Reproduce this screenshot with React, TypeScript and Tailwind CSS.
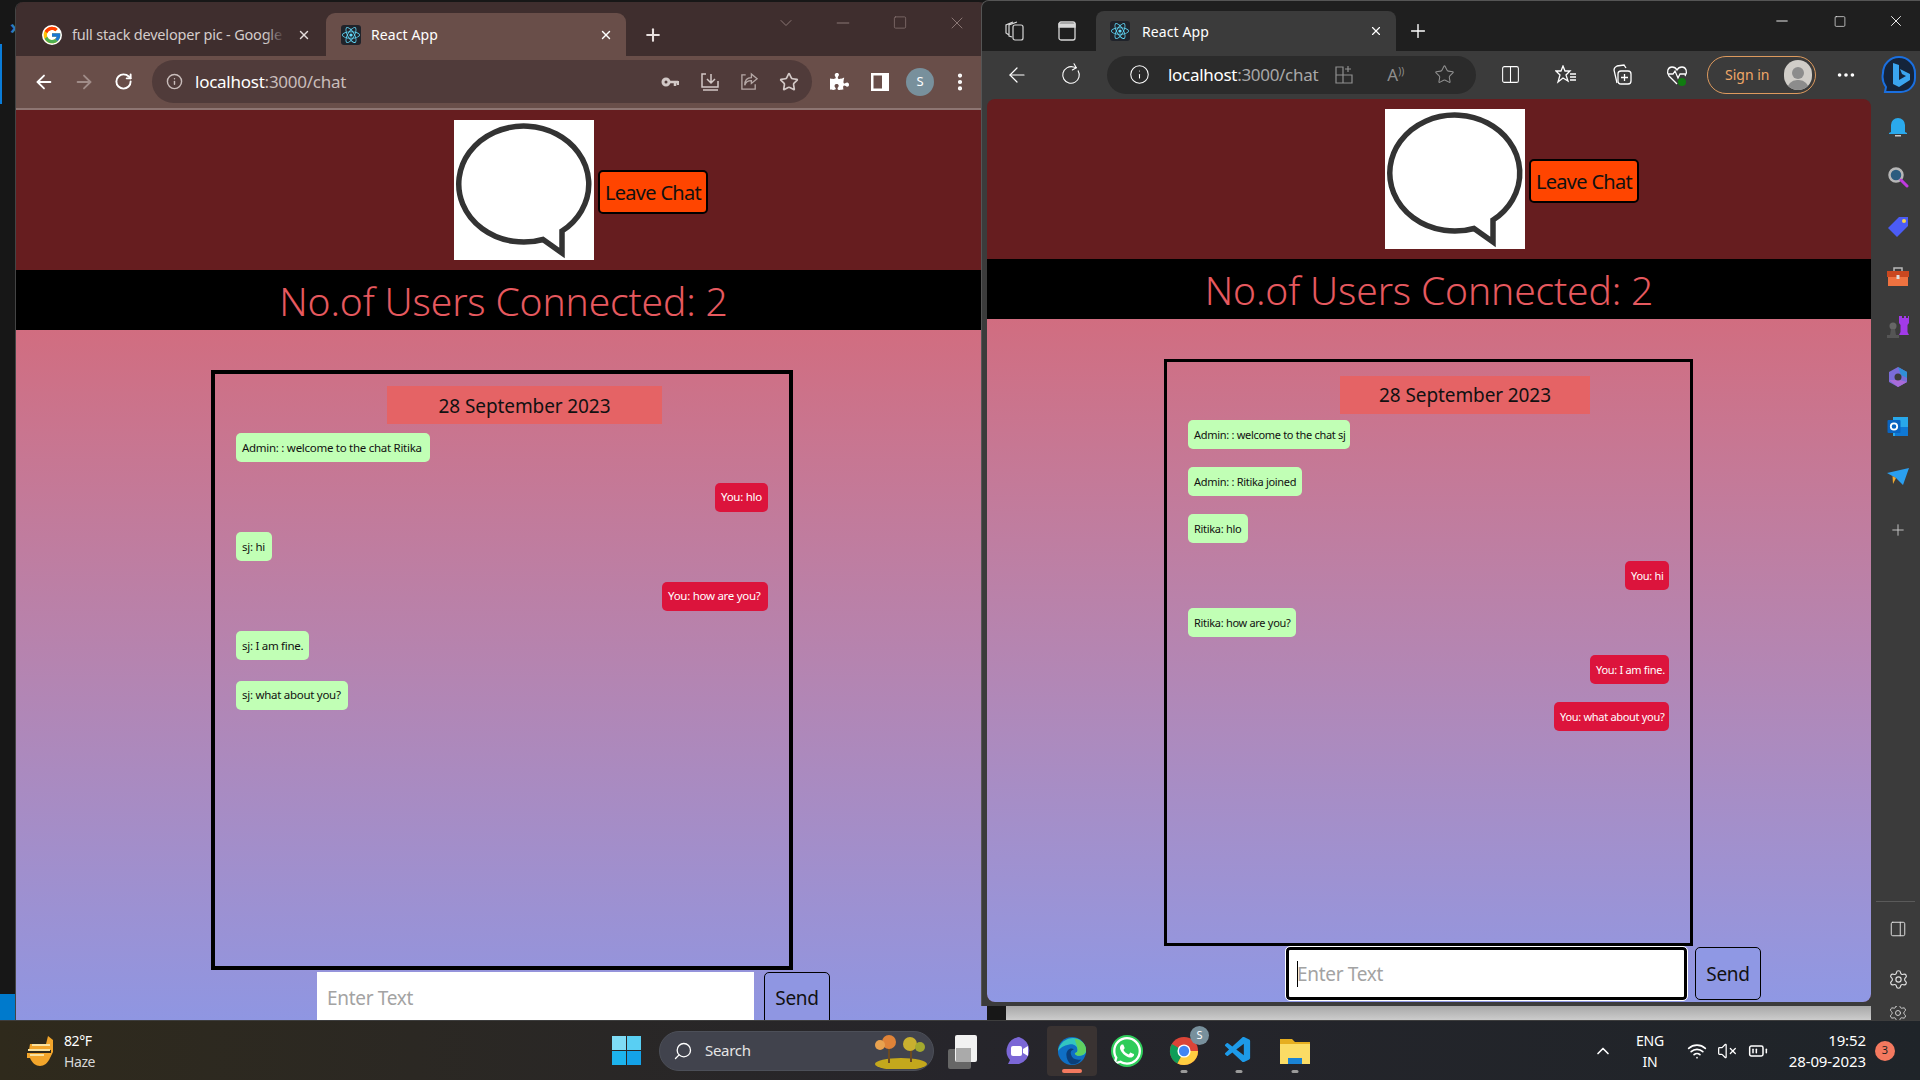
import React from "react";
import { ArrowLeft, ArrowRight, RotateCw, Info, Star, Plus, X, Minus, Square, ChevronDown, ChevronUp, MoreVertical, MoreHorizontal, Search, Settings, Wifi, VolumeX, BatteryMedium, Columns2, PanelRight } from "lucide-react";
import { FaReact, FaWhatsapp, FaPuzzlePiece } from "react-icons/fa";
import { FcGoogle } from "react-icons/fc";
import { VscVscode } from "react-icons/vsc";

const font = { fontFamily: '"Noto Sans", sans-serif' };

function ReactFav() {
  return <span className="flex h-[20px] w-[20px] items-center justify-center rounded-[3px] bg-[#20232a]"><FaReact className="h-[18px] w-[18px] text-[#61dafb]" /></span>;
}

function BubbleImage() {
  return (
    <div className="h-[140px] w-[140px] shrink-0 bg-white">
      <svg viewBox="0 0 140 140" className="h-full w-full">
        <path d="M108 111V133L89 119.500A65 58 0 1 1 108 111Z" fill="#fff" stroke="#333" strokeWidth="5.500" />
      </svg>
    </div>
  );
}

function Msg({ text, me, w, small }: { text: string; me?: boolean; w: string; small?: boolean }) {
  return (
    <div className={`flex h-[29px] items-center rounded-[5px] px-[6px] leading-none ${small ? "text-[11px] tracking-[-0.3px]" : "text-[11.5px] tracking-[-0.28px]"} ${w} ${me ? "self-end bg-[#dc143c] text-white" : "self-start bg-[#c1ffb5] text-[#111]"}`}>
      <span className="whitespace-nowrap">{text}</span>
    </div>
  );
}

function Heading() {
  return <div className="flex h-[60px] shrink-0 items-center justify-center bg-black pt-[2px] text-[39px] font-light tracking-[-0.15px] text-[#e6595f]">No.of Users Connected: 2</div>;
}

function LeaveBtn({ cls }: { cls: string }) {
  return <button className={`flex h-[44px] items-center justify-center rounded-[5px] border-2 border-black bg-[#ff4500] pt-[1px] text-[20px] tracking-[-0.7px] text-[#111] ${cls}`}>Leave Chat</button>;
}

function ChromeWin() {
  return (
    <div className="absolute left-[15px] top-[2px] flex h-[1018px] w-[972px] flex-col overflow-hidden rounded-t-[8px] border-l border-[#444]" style={font}>
      <div className="flex h-[54px] shrink-0 items-end bg-[#3f2e2e] text-[14px]">
        <div className="flex h-[43px] w-[310px] items-center">
          <FcGoogle className="ml-[26px] h-[20px] w-[20px] rounded-full bg-white" />
          <span className="relative ml-[10px] w-[213px] overflow-hidden whitespace-nowrap text-[14.5px] tracking-[-0.2px] text-[#d4cccb]">
            full stack developer pic - Google
            <span className="absolute bottom-0 right-0 top-0 w-[20px] bg-gradient-to-r from-transparent to-[#3f2e2e]" />
          </span>
          <X className="ml-[12px] h-[14px] w-[14px] text-[#e4dcdb]" strokeWidth={2.5} />
        </div>
        <div className="flex h-[43px] w-[300px] items-center rounded-t-[9px] bg-[#694e49] text-white">
          <span className="ml-[15px]"><ReactFav /></span>
          <span className="ml-[10px] tracking-[0.1px]">React App</span>
          <X className="ml-auto mr-[13px] h-[14px] w-[14px]" strokeWidth={2.5} />
        </div>
        <div className="flex h-[43px] flex-1 items-center">
          <Plus className="ml-[17px] h-[20px] w-[20px] text-[#e8e0df]" strokeWidth={2.5} />
          <ChevronDown className="ml-[113px] mb-[24px] h-[20px] w-[20px] text-[#8a7674]" strokeWidth={1.2} />
          <Minus className="ml-[37px] mb-[24px] h-[20px] w-[20px] text-[#8a7674]" strokeWidth={1.2} />
          <Square className="ml-[37px] mb-[24px] h-[15px] w-[20px] text-[#8a7674]" strokeWidth={1.2} />
          <X className="ml-[37px] mb-[24px] h-[20px] w-[20px] text-[#8a7674]" strokeWidth={1.2} />
        </div>
      </div>
      <div className="flex h-[52px] shrink-0 items-center bg-[#694e49] pb-[1px]">
        <ArrowLeft className="ml-[17px] h-[22px] w-[22px] text-white" strokeWidth={2} />
        <ArrowRight className="ml-[18px] h-[22px] w-[22px] text-[#a08c88]" strokeWidth={2} />
        <RotateCw className="ml-[19px] h-[19px] w-[19px] text-white" strokeWidth={2.4} />
        <div className="ml-[19px] flex h-[43px] w-[660px] items-center rounded-full bg-[#503b3a]">
          <Info className="ml-[14px] h-[17px] w-[17px] text-[#c9bdbb]" strokeWidth={2} />
          <span className="ml-[12px] text-[17px] tracking-[-0.25px] text-white">localhost<span className="text-[#c9bdbb]">:3000/chat</span></span>
          <svg viewBox="0 0 18 12" className="ml-auto h-[12px] w-[18px] fill-none stroke-[#d2c8c6]"><circle cx="5" cy="6" r="3" strokeWidth="3" /><path d="M8 6h9M14 6v4M17 5v4" strokeWidth="2.500" /></svg>
          <svg viewBox="0 0 20 20" className="ml-[21px] h-[20px] w-[20px] fill-none stroke-[#d2c8c6] stroke-[1.5]"><path d="M6 2H2v13h16V9M3 18h15M11 2v9M7 7l4 4 4-4" /></svg>
          <svg viewBox="0 0 20 20" className="ml-[20px] h-[19px] w-[19px] fill-none stroke-[#b5a8a6] stroke-[1.4]"><path d="M6 3H2v15h14v-5M12 2l6 5-6 5V9c-4 0-6 1-7 5 0-6 3-8 7-8z" /></svg>
          <Star className="ml-[20px] mr-[13px] h-[20px] w-[20px] text-[#d2c8c6]" strokeWidth={2} />
        </div>
        <FaPuzzlePiece className="ml-[18px] h-[19px] w-[19px] text-white" />
        <svg viewBox="0 0 18 18" className="ml-[22px] h-[18px] w-[18px]"><path d="M0 0h18v18H0z" fill="#fff" /><path d="M2.500 2.500H11v13H2.500z" fill="#694e49" /></svg>
        <span className="ml-[17px] flex h-[28px] w-[28px] items-center justify-center rounded-full bg-[#78909c] text-[13px] text-white">S</span>
        <MoreVertical className="ml-[15px] h-[22px] w-[22px] text-white" strokeWidth={2.6} />
      </div>
      <div className="h-[2px] shrink-0 bg-[#8d7572]" />
      <div className="flex min-h-0 flex-1 flex-col bg-[#661d1f]">
        <div className="flex h-[160px] shrink-0 pl-[438px] pt-[10px]">
          <BubbleImage />
          <LeaveBtn cls="ml-[4px] mt-[50px] w-[110px]" />
        </div>
        <div className="w-[966px] bg-black pl-[9px]"><Heading /></div>
        <div className="flex min-h-0 flex-1 flex-col bg-gradient-to-b from-[#d16d80] to-[#8f96e2] pl-[195px] pt-[40px]">
          <div className="flex h-[600px] w-[582px] shrink-0 flex-col border-[4px] border-black px-[21px] pt-[12px]">
            <div className="ml-[151px] flex h-[38px] w-[275px] items-center justify-center bg-[#e56365] pt-[2px] text-[19px] tracking-[-0.1px] text-[#111]">28 September 2023</div>
            <div className="mt-[9px] flex flex-col gap-[20.5px]">
              <Msg text="Admin: : welcome to the chat Ritika" w="w-[194px]" />
              <Msg text="You: hlo" me w="w-[53px]" />
              <Msg text="sj: hi" w="w-[36px]" />
              <Msg text="You: how are you?" me w="w-[106px]" />
              <Msg text="sj: I am fine." w="w-[73px]" />
              <Msg text="sj: what about you?" w="w-[112px]" />
            </div>
          </div>
          <div className="ml-[106px] mt-[2px] flex h-[60px] items-start">
            <div className="flex h-[60px] w-[437px] items-center bg-white pb-[7px] pl-[10px] text-[19px] tracking-[-0.3px] text-[#a3a3a3]">Enter Text</div>
            <div className="ml-[10px] flex h-[60px] w-[66px] items-center justify-center rounded-[5px] border border-black bg-[#8f96e2] pb-[7px] text-[19px] tracking-[-0.3px] text-[#111]">Send</div>
          </div>
        </div>
      </div>
    </div>
  );
}

function SideIcon({ children, cls = "" }: { children: React.ReactNode; cls?: string }) {
  return <div className={`flex h-[50px] items-center justify-center ${cls}`}>{children}</div>;
}

function Sidebar() {
  return (
    <div className="flex w-[49px] shrink-0 flex-col items-center pl-[5px]">
      <div className="mt-[3px] w-full">
        <SideIcon><svg viewBox="0 0 20 22" className="h-[22px] w-[20px]"><path d="M3 16V9a7 7 0 0 1 14 0v7l2 1v1H1v-1z" fill="#2aa9ec" /><path d="M7 19h6v1.500H7z" fill="#c9c9c9" /></svg></SideIcon>
        <SideIcon><svg viewBox="0 0 22 22" className="h-[22px] w-[22px]"><circle cx="9" cy="9" r="6.500" fill="#2c5c7f" stroke="#b6b6b6" strokeWidth="2.500" /><path d="M14 14l6 6" stroke="#c03ae0" strokeWidth="3" strokeLinecap="round" /></svg></SideIcon>
        <SideIcon><svg viewBox="0 0 22 22" className="h-[22px] w-[22px]"><path d="M12 1h9v9L10 21 1 12z" fill="#4b5cf5" /><circle cx="17" cy="5" r="2" fill="#f6d24a" /></svg></SideIcon>
        <SideIcon><svg viewBox="0 0 24 20" className="h-[20px] w-[24px]"><path d="M8 4V1h8v3" fill="none" stroke="#b9b9b9" strokeWidth="1.500" /><path d="M1 4h22v6H1z" fill="#c9471f" /><path d="M2 10h20v9H2z" fill="#ee7240" /><path d="M10.500 8h3v4h-3z" fill="#ddd" /></svg></SideIcon>
        <SideIcon><svg viewBox="0 0 24 24" className="h-[24px] w-[24px]"><path d="M14 1h2v2h2V1h2v2h2V1h1v7l-1.500 2v7l1.500 3H13l1.500-3v-7L13 8V1z" fill="#a23ae8" /><circle cx="7" cy="11" r="3.500" fill="#666" /><path d="M5 14h4l1 6H4zM1 20h12v3H1z" fill="#555" /></svg></SideIcon>
        <SideIcon><svg viewBox="0 0 22 22" className="h-[22px] w-[22px]"><path d="M11 1 20 6v10l-9 5-9-5V6z" fill="#7a6cd8" /><path d="M11 1 20 6v6l-6-3z" fill="#2f8fd8" /><path d="M2 14l9 7 9-5-7-2z" fill="#a86bd8" /><circle cx="11" cy="11" r="3.500" fill="#3b3b3b" /></svg></SideIcon>
        <SideIcon><svg viewBox="0 0 22 22" className="h-[22px] w-[22px]"><path d="M6 1h15v19H6z" fill="#28a8ea" /><path d="M8 11h13v9H8z" fill="#0f78d4" /><rect x="0.500" y="4" width="13" height="13" rx="1" fill="#0a64c0" /><circle cx="7" cy="10.500" r="3.200" fill="none" stroke="#fff" strokeWidth="1.800" /></svg></SideIcon>
        <SideIcon><svg viewBox="0 0 22 18" className="h-[18px] w-[22px]"><path d="M0 5 22 0 16 17 9 10z" fill="#2a9ff0" /><path d="M0 5 9 10 6 16 5.500 8z" fill="#f0a830" /></svg></SideIcon>
        <SideIcon cls="pt-[6px]"><Plus className="h-[18px] w-[18px] text-[#cfcfcf]" strokeWidth={1.2} /></SideIcon>
      </div>
      <div className="mt-auto w-full">
        <div className="mb-[2px] mr-[5px] h-px bg-[#5a5a5a]" />
        <SideIcon><PanelRight className="h-[18px] w-[18px] text-[#e0e0e0]" strokeWidth={1.3} /></SideIcon>
        <SideIcon cls="mb-[2px]"><Settings className="h-[21px] w-[21px] text-[#e0e0e0]" strokeWidth={1.3} /></SideIcon>
      </div>
    </div>
  );
}

function BingLogo() {
  return (
    <svg viewBox="0 0 36 40" className="h-[40px] w-[36px]">
      <path d="M18 2a16 16 0 0 1 16 16v5a14 14 0 0 1-14 14H4l1-5a17 17 0 0 1-3-14A16 16 0 0 1 18 2z" fill="#15243a" stroke="#1a6fe0" strokeWidth="2" />
      <path d="M12 8l6 2v15l7-4-4-2-2-5 10 5v6l-11 7-6-3z" fill="#3aa5f0" />
    </svg>
  );
}

function EdgeWin() {
  return (
    <div className="absolute left-[981px] top-0 flex h-[1006px] w-[939px] flex-col overflow-hidden rounded-tl-[8px] border-l border-t border-[#555] bg-[#3b3b3b] text-white" style={font}>
      <div className="flex h-[50px] shrink-0 items-end bg-[#1f1f1f] text-[14px]">
        <svg viewBox="0 0 20 22" className="mb-[9px] ml-[23px] h-[22px] w-[20px] fill-none stroke-[#d8d8d8] stroke-[1.2]"><rect x="8" y="5" width="10" height="15" rx="2" /><path d="M7 17 4 16V5l8-3M4 15 1 13V5l7-3" /></svg>
        <svg viewBox="0 0 18 20" className="mb-[10px] ml-[33px] h-[20px] w-[18px] fill-none stroke-[#d8d8d8] stroke-[1.3]"><rect x="1" y="1" width="16" height="18" rx="2" /><path d="M1 3h16v3H1z" fill="#d8d8d8" /></svg>
        <div className="ml-[20px] flex h-[40px] w-[300px] items-center rounded-t-[8px] bg-[#3b3b3b]">
          <span className="ml-[14px]"><ReactFav /></span>
          <span className="ml-[12px] tracking-[0.1px]">React App</span>
          <X className="ml-auto mr-[13px] h-[14px] w-[14px]" strokeWidth={2} />
        </div>
        <Plus className="mb-[9px] ml-[11px] h-[22px] w-[22px]" strokeWidth={1.5} />
        <Minus className="mb-[21px] ml-[344px] h-[18px] w-[18px]" strokeWidth={1.2} />
        <Square className="mb-[23px] ml-[40px] h-[13px] w-[18px]" strokeWidth={1.2} />
        <X className="mb-[21px] ml-[38px] h-[18px] w-[18px]" strokeWidth={1.2} />
      </div>
      <div className="flex h-[48px] shrink-0 items-center pb-[1px]">
        <ArrowLeft className="ml-[23px] h-[24px] w-[24px]" strokeWidth={1.2} />
        <RotateCw className="ml-[31px] h-[22px] w-[22px] -rotate-[30deg]" strokeWidth={1.2} />
        <div className="ml-[25px] flex h-[38px] w-[369px] items-center rounded-full bg-[#2b2b2b]">
          <Info className="ml-[22px] h-[21px] w-[21px]" strokeWidth={1.2} />
          <span className="ml-[18px] text-[17px] tracking-[-0.3px]">localhost<span className="text-[#a8a8a8]">:3000/chat</span></span>
          <svg viewBox="0 0 20 20" className="ml-[16px] h-[20px] w-[20px] fill-none stroke-[#8f8f8f] stroke-[1.2]"><path d="M2 2h7v16H2zM2 10h16v8H9M14 1v6M11 4h6" /></svg>
          <span className="ml-[33px] text-[17px] leading-none text-[#8f8f8f]">A<span className="align-top text-[10px]">))</span></span>
          <Star className="ml-[30px] h-[21px] w-[21px] text-[#8f8f8f]" strokeWidth={1.2} />
        </div>
        <Columns2 className="ml-[24px] h-[21px] w-[21px]" strokeWidth={1.2} />
        <svg viewBox="0 0 22 20" className="ml-[34px] h-[20px] w-[22px] fill-none stroke-white stroke-[1.300]"><path d="M8 1l2 5h5l-4 4 2 6-5-3-5 4 2-7-4-4h5zM15 9h6M15 12h6M15 15h6" /></svg>
        <svg viewBox="0 0 20 22" className="ml-[35px] h-[22px] w-[20px] fill-none stroke-white stroke-[1.300]"><path d="M5 19 2 6c0-2 1-3 3-4l7-1 2 3" /><rect x="6" y="7" width="13" height="13" rx="3" /><path d="M12.500 10v7M9 13.500h7" /></svg>
        <svg viewBox="0 0 22 22" className="ml-[34px] h-[22px] w-[22px]"><path d="M11 20 3 12C0 8 2 3 6 3c2 0 4 1 5 3 1-2 3-3 5-3 4 0 6 5 3 9M2 10h5l2-3 3 7 2-4h6" fill="none" stroke="#fff" strokeWidth="1.300" /><circle cx="16" cy="18" r="4" fill="#107c10" /></svg>
        <div className="ml-[19px] flex h-[38px] w-[109px] items-center rounded-full border-[1.5px] border-[#dd9a5e]">
          <span className="ml-[17px] text-[14px] tracking-[0px] text-[#f0a868]">Sign in</span>
          <span className="ml-auto mr-[3px] flex h-[30px] w-[28px] flex-col items-center justify-end overflow-hidden rounded-full bg-[#d0cdc8]">
            <span className="mb-[1px] h-[12px] w-[12px] rounded-full bg-[#8c8c8c]" />
            <span className="h-[10px] w-[22px] rounded-t-full bg-[#8c8c8c]" />
          </span>
        </div>
        <MoreHorizontal className="ml-[19px] h-[22px] w-[22px]" strokeWidth={2} />
        <span className="ml-[24px]"><BingLogo /></span>
      </div>
      <div className="flex min-h-0 flex-1">
        <div className="mb-[4px] ml-[5px] flex min-w-0 flex-1 flex-col overflow-hidden rounded-[8px] bg-[#661d1f]">
          <div className="flex h-[160px] shrink-0 pl-[398px] pt-[10px]">
            <BubbleImage />
            <LeaveBtn cls="ml-[4px] mt-[50px] w-[110px]" />
          </div>
          <Heading />
          <div className="flex min-h-0 flex-1 flex-col bg-gradient-to-b from-[#d16d80] to-[#8f98e4] pl-[177px] pt-[40px]">
            <div className="flex h-[587px] w-[529px] shrink-0 flex-col border-[3px] border-black px-[21px] pt-[14px]">
              <div className="ml-[152px] flex h-[38px] w-[250px] items-center justify-center bg-[#e56365] text-[19px] tracking-[-0.1px] text-[#111]">28 September 2023</div>
              <div className="mt-[6px] flex flex-col gap-[18px]">
                <Msg small text="Admin: : welcome to the chat sj" w="w-[162px]" />
                <Msg small text="Admin: : Ritika joined" w="w-[114px]" />
                <Msg small text="Ritika: hlo" w="w-[60px]" />
                <Msg small text="You: hi" me w="w-[44px]" />
                <Msg small text="Ritika: how are you?" w="w-[108px]" />
                <Msg small text="You: I am fine." me w="w-[79px]" />
                <Msg small text="You: what about you?" me w="w-[115px]" />
              </div>
            </div>
            <div className="ml-[122px] mt-[1px] flex h-[53px] items-start">
              <div className="flex h-[53px] w-[401px] items-center rounded-[4px] border-[3px] border-black bg-white pl-[8px] pt-[1px] text-[19px] tracking-[-0.3px] text-[#a3a3a3] outline outline-1 outline-white">
                <span className="mr-[-1px] h-[26px] w-px bg-black" />Enter Text
              </div>
              <div className="ml-[8px] flex h-[53px] w-[66px] items-center justify-center rounded-[5px] border border-black bg-[#8f98e4] pt-[1px] text-[19px] tracking-[-0.3px] text-[#111]">Send</div>
            </div>
          </div>
        </div>
        <Sidebar />
      </div>
    </div>
  );
}

function Taskbar() {
  const dot = <span className="absolute bottom-[3px] left-1/2 h-[3px] w-[7px] -translate-x-1/2 rounded-full bg-[#9a9a9a]" />;
  const Slot = ({ children, w = 55, d }: { children: React.ReactNode; w?: number; d?: boolean }) => (
    <div className="relative flex h-[50px] items-center justify-center" style={{ width: w }}>{children}{d && dot}</div>
  );
  return (
    <div className="absolute bottom-0 left-0 flex h-[60px] w-[1920px] items-center border-t border-[#3d3d3d] bg-gradient-to-r from-[#2f2a1c] via-[#26252b] to-[#1f2429] text-white" style={font}>
      <svg viewBox="0 0 32 30" className="ml-[24px] h-[30px] w-[32px]"><path d="M24 0 22 8H6l-1 6h22v3H3v5h3c2 5 6 8 10 8s8-3 10-8l3-6V4z" fill="#f2a52b" /><path d="M8 9h18M4 14h22M6 19h14" stroke="#f8e2a0" strokeWidth="2" /></svg>
      <div className="ml-[8px] flex w-[60px] flex-col text-[14px] leading-[21px] tracking-[-0.4px]">
        <span>82°F</span><span className="text-[#d8d8d8]">Haze</span>
      </div>
      <div className="ml-[488px] grid h-[29px] w-[29px] grid-cols-2 gap-[1px]">
        <span className="bg-[#7fdcf5]" /><span className="bg-[#59cff3]" /><span className="bg-[#1db4ee]" /><span className="bg-[#14a2e8]" />
      </div>
      <div className="ml-[18px] flex h-[40px] w-[275px] items-center rounded-full border border-[#4c4f58] bg-[#41434d]">
        <Search className="ml-[13px] h-[20px] w-[20px] -scale-x-100" strokeWidth={1.6} />
        <span className="ml-[12px] text-[15px] tracking-[-0.3px] text-[#e5e5e5]">Search</span>
        <svg viewBox="0 0 64 36" className="ml-auto mr-[2px] h-[36px] w-[64px]"><ellipse cx="34" cy="31" rx="26" ry="6" fill="#c4a81c" /><path d="M22 12v18M44 14v15" stroke="#6b4a22" strokeWidth="2" /><circle cx="22" cy="9" r="7" fill="#df8338" /><circle cx="13" cy="12" r="5" fill="#e8a24f" /><circle cx="43" cy="11" r="7" fill="#c9b02f" /><circle cx="53" cy="14" r="5" fill="#a3a82e" /></svg>
      </div>
      <div className="relative ml-[14px] h-[36px] w-[32px]">
        <span className="absolute left-0 top-[16px] h-[20px] w-[23px] rounded-[2px] bg-[#666]" />
        <span className="absolute right-[3px] top-[2px] h-[27px] w-[22px] rounded-[2px] bg-[#f2f2f2]" />
        <span className="absolute left-[8px] top-[15px] h-[14px] w-[15px] bg-[#aaa]" />
      </div>
      <div className="ml-[11px] flex items-center">
        <Slot w={56}>
          <svg viewBox="0 0 30 30" className="h-[30px] w-[30px]"><path d="M15 1a14 14 0 0 1 0 27H4l2-4A14 14 0 0 1 15 1z" fill="#7b67d6" /><rect x="7" y="10" width="11" height="10" rx="2" fill="#fff" /><path d="M19 13l5-3v10l-5-3z" fill="#fff" /></svg>
        </Slot>
        <div className="relative flex h-[50px] w-[50px] items-center justify-center rounded-[4px] bg-[#3a3332]">
          <svg viewBox="0 0 32 32" className="h-[30px] w-[30px]"><circle cx="16" cy="16" r="15" fill="#0f6fc4" /><path d="M1 16C3 5 14 0 22 3c5 2 9 7 9 13 0 3-3 5-7 5-3 0-5-1-5-3 2 0 3-1 3-3 0-4-4-7-9-6-6 1-10 4-12 7z" fill="#33c6c0" /><path d="M31 15c0 3-3 6-7 6-3 0-5-1-5-3 2 0 3-1 3-3 0-5-3-9-3-12 7 1 12 6 12 12z" fill="#5fd160" /><path d="M10 20c0-5 4-8 8-6-3 1-4 3-3 6 1 4 5 6 11 5-3 4-7 6-11 5-3-2-5-6-5-10z" fill="#0b3f7a" /></svg>
          <span className="absolute bottom-[3px] left-1/2 h-[4px] w-[20px] -translate-x-1/2 rounded-full bg-[#f4795f]" />
        </div>
        <Slot w={60}><FaWhatsapp className="h-[32px] w-[32px] rounded-full bg-[#2ecc5a] text-white" /></Slot>
        <Slot w={54} d>
          <svg viewBox="0 0 32 32" className="h-[30px] w-[30px]"><circle cx="16" cy="16" r="15" fill="#db4437" /><path d="M16 16 3 8.500A15 15 0 0 0 9 29.300L16 16z" fill="#0f9d58" /><path d="M16 16 9 29.300A15 15 0 0 0 31 16z" fill="#ffcd40" /><circle cx="16" cy="16" r="7" fill="#fff" /><circle cx="16" cy="16" r="5.500" fill="#4285f4" /></svg>
          <span className="absolute right-[2px] top-[0px] flex h-[19px] w-[19px] items-center justify-center rounded-full bg-[#78909c] text-[11px]">S</span>
        </Slot>
        <Slot w={55} d><VscVscode className="h-[31px] w-[31px] text-[#1d9ae8]" /></Slot>
        <Slot w={57} d>
          <svg viewBox="0 0 32 28" className="h-[28px] w-[32px]"><path d="M1 2h12l3 3h15v22H1z" fill="#e6ae1f" /><path d="M1 7h30v20H1z" fill="#fbdc65" /><path d="M9 21h14v6H9z" fill="#1a83d4" /></svg>
        </Slot>
      </div>
      <ChevronUp className="ml-[270px] h-[20px] w-[20px]" strokeWidth={2} />
      <div className="ml-[15px] flex w-[44px] flex-col items-center text-[14px] leading-[21px] tracking-[-0.2px]"><span>ENG</span><span>IN</span></div>
      <Wifi className="ml-[15px] h-[20px] w-[20px]" strokeWidth={2} />
      <VolumeX className="ml-[10px] h-[20px] w-[20px]" strokeWidth={1.5} />
      <BatteryMedium className="ml-[11px] h-[20px] w-[20px]" strokeWidth={1.8} />
      <div className="ml-[1px] flex w-[97px] flex-col items-end text-[15px] leading-[21px] tracking-[-0.1px]"><span>19:52</span><span>28-09-2023</span></div>
      <span className="ml-[9px] flex h-[20px] w-[20px] items-center justify-center rounded-full bg-[#f4795f] text-[11px] text-[#222]">3</span>
    </div>
  );
}

export default function App() {
  return (
    <div className="relative h-[1080px] w-[1920px] overflow-hidden bg-[#171717]">
      <div className="absolute left-0 top-[44px] h-[60px] w-[2px] bg-[#0a7cd8]" />
      <span className="absolute left-[10px] top-[12px] text-[20px] font-bold text-[#2a7cc0]" style={font}>›</span>
      <div className="absolute bottom-[60px] left-0 h-[26px] w-[16px] bg-[#007acc]" />
      <ChromeWin />
      <div className="absolute bottom-[60px] left-[987px] h-[14px] w-[933px] bg-[#171717]" />
      <div className="absolute bottom-[60px] left-[1006px] h-[14px] w-[865px] bg-gradient-to-b from-[#a8a8a8] to-[#cccccc]" />
      <div className="absolute bottom-[60px] left-[1871px] flex h-[14px] w-[49px] items-start justify-center overflow-hidden bg-[#3b3b3b] pl-[5px]"><Settings className="-mt-[3px] h-[20px] w-[20px] text-[#cfcfcf]" strokeWidth={1.2} /></div>
      <EdgeWin />
      <Taskbar />
    </div>
  );
}
